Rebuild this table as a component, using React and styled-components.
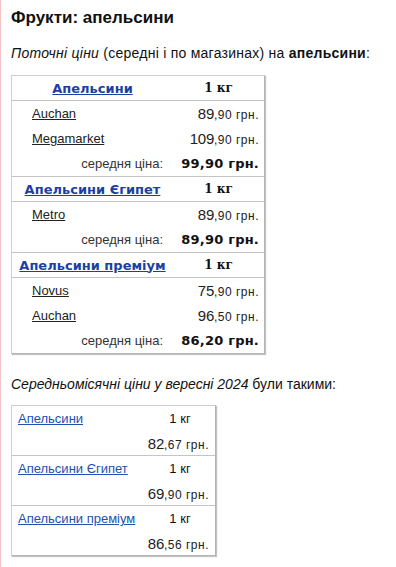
import React from "react";
import styled, { createGlobalStyle } from "styled-components";

const Global = createGlobalStyle`
  html, body { margin: 0; padding: 0; background: #fff; }
  body { font-family: "Liberation Sans", Arial, sans-serif; color: #111; }
`;

const Page = styled.div`
  min-height: 567px;
  box-sizing: border-box;
  border-left: 1px solid #f6c2ca;
  padding: 8px 0 0 10px;
`;

const Title = styled.h1`
  margin: 0;
  font-size: 17px;
  line-height: 20px;
  font-weight: bold;
  color: #111;
`;

const Lead = styled.p`
  margin: ${(p) => p.$mt}px 0 0;
  font-size: ${(p) => p.$fs}px;
  letter-spacing: ${(p) => p.$ls || 0}px;
  line-height: 20px;
  color: #111;
  em { font-style: italic; }
  b { font-weight: bold; }
`;

const Table = styled.div`
  margin-top: ${(p) => p.$mt}px;
  width: ${(p) => p.$w}px;
  border: 1px solid #cfcfcf;
  border-right-color: #b4b4b4;
  border-bottom-color: #b4b4b4;
  box-shadow: 1px 1px 1px #c4c4c4;
`;

const Group = styled.div`
  & + & { border-top: 1px solid #c4c4c4; }
`;

const Row = styled.div`
  display: grid;
  grid-template-columns: ${(p) => p.$cols};
  height: ${(p) => p.$h}px;
  align-items: center;
  ${(p) => p.$line && "border-bottom: 1px solid #c4c4c4;"}
`;

const HeadLink = styled.a`
  justify-self: center;
  font-family: "DejaVu Sans", Verdana, sans-serif;
  font-weight: bold;
  font-size: 13px;
  color: #1d3f9f;
  text-decoration: underline;
`;

const HeadUnit = styled.span`
  justify-self: center;
  font-family: "DejaVu Serif", serif;
  font-weight: bold;
  font-size: 12px;
  color: #111;
`;

const Store = styled.a`
  justify-self: start;
  padding-left: 20px;
  font-size: 13px;
  color: #222;
  text-decoration: underline;
`;

const Price = styled.span`
  justify-self: end;
  padding-right: ${(p) => p.$pr}px;
  font-size: 15px;
  letter-spacing: -0.3px;
  color: #222;
  small { font-size: 12px; letter-spacing: 0.5px; }
`;

const AvgLabel = styled.span`
  justify-self: end;
  padding-right: 10px;
  font-size: 13px;
  color: #333;
`;

const AvgPrice = styled.span`
  justify-self: end;
  padding-right: 5px;
  font-family: "DejaVu Sans", Verdana, sans-serif;
  font-weight: bold;
  font-size: 13px;
  letter-spacing: 0.2px;
  color: #111;
`;

const MonthLink = styled.a`
  justify-self: start;
  padding-left: 6px;
  font-size: 13px;
  color: #2350b0;
  text-decoration: underline;
`;

const MonthUnit = styled.span`
  justify-self: center;
  font-size: 13px;
  color: #111;
`;

const current = [
  {
    name: "Апельсини",
    stores: [
      ["Auchan", "89", "90"],
      ["Megamarket", "109", "90"],
    ],
    avg: "99,90 грн.",
  },
  {
    name: "Апельсини Єгипет",
    stores: [["Metro", "89", "90"]],
    avg: "89,90 грн.",
  },
  {
    name: "Апельсини преміум",
    stores: [
      ["Novus", "75", "90"],
      ["Auchan", "96", "50"],
    ],
    avg: "86,20 грн.",
  },
];

const monthly = [
  ["Апельсини", "82", "67"],
  ["Апельсини Єгипет", "69", "90"],
  ["Апельсини преміум", "86", "56"],
];

const C1 = "161px 91px";
const C2 = "133px 70px";

export default function App() {
  return (
    <>
      <Global />
      <Page>
        <Title>Фрукти: апельсини</Title>
        <Lead $mt={15} $fs={14} $ls={0.25}>
          <em>Поточні ціни</em> (середні і по магазинах) на <b>апельсини</b>:
        </Lead>
        <Table $mt={12} $w={252}>
          {current.map((g) => (
            <Group key={g.name}>
              <Row $cols={C1} $h={24} $line>
                <HeadLink href="#">{g.name}</HeadLink>
                <HeadUnit>1 кг</HeadUnit>
              </Row>
              {g.stores.map(([s, a, b]) => (
                <Row key={s} $cols={C1} $h={25}>
                  <Store href="#">{s}</Store>
                  <Price $pr={5}>
                    {a}
                    <small>,{b} грн.</small>
                  </Price>
                </Row>
              ))}
              <Row $cols={C1} $h={25}>
                <AvgLabel>середня ціна:</AvgLabel>
                <AvgPrice>{g.avg}</AvgPrice>
              </Row>
            </Group>
          ))}
        </Table>
        <Lead $mt={20} $fs={14} $ls={0}>
          <em>Середньомісячні ціни у вересні 2024</em> були такими:
        </Lead>
        <Table $mt={11} $w={203}>
          {monthly.map(([n, a, b]) => (
            <Group key={n}>
              <Row $cols={C2} $h={25}>
                <MonthLink href="#">{n}</MonthLink>
                <MonthUnit>1 кг</MonthUnit>
              </Row>
              <Row $cols={C2} $h={24}>
                <span />
                <Price $pr={6}>
                  {a}
                  <small>,{b} грн.</small>
                </Price>
              </Row>
            </Group>
          ))}
        </Table>
      </Page>
    </>
  );
}
